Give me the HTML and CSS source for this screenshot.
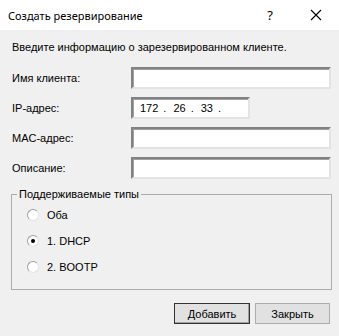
FILE: index.html
```html
<!DOCTYPE html>
<html lang="ru">
<head>
  <meta charset="UTF-8" />
  <title>Создать резервирование</title>
  <link rel="stylesheet" href="styles.css">
</head>
<body>
  <div class="window">
    <div class="titlebar">
      <span class="title">Создать резервирование</span>
      <span class="help">?</span>
      <span class="close">
        <svg width="12" height="12" viewBox="0 0 12 12"><path d="M1 1 L11 11 M11 1 L1 11" stroke="#000" stroke-width="1.1" fill="none"/></svg>
      </span>
    </div>

    <div class="content">
      <p class="intro">Введите информацию о зарезервированном клиенте.</p>

      <div class="row">
        <label>Имя клиента:</label>
        <div class="field wide"></div>
      </div>
      <div class="row">
        <label>IP-адрес:</label>
        <div class="field ip">
          <span class="oct">172</span><span class="sep">.</span>
          <span class="oct">26</span><span class="sep">.</span>
          <span class="oct">33</span><span class="sep">.</span>
        </div>
      </div>
      <div class="row">
        <label>MAC-адрес:</label>
        <div class="field wide"></div>
      </div>
      <div class="row">
        <label>Описание:</label>
        <div class="field wide"></div>
      </div>

      <fieldset class="group">
        <legend>Поддерживаемые типы</legend>
        <div class="radio"><span class="dot"></span>Оба</div>
        <div class="radio"><span class="dot checked"></span>1. DHCP</div>
        <div class="radio"><span class="dot"></span>2. BOOTP</div>
      </fieldset>

      <div class="buttons">
        <button class="btn default">Добавить</button>
        <button class="btn">Закрыть</button>
      </div>
    </div>
  </div>
</body>
</html>
```

FILE: styles.css
```css
body {
  margin: 0;
  background: #f0f0f0;
  font-family: "Liberation Sans", Arial, sans-serif;
  font-size: 11px;
  color: #000;
}
.window {
  width: 339px;
  height: 336px;
  background: #f0f0f0;
}
.titlebar {
  height: 30px;
  background: #fff;
  display: flex;
  align-items: center;
  font-family: "Noto Sans", "Open Sans", sans-serif;
  font-size: 11px;
}
.title {
  margin-left: 8px;
  flex: 1;
}
.help {
  width: 46px;
  text-align: center;
  font-size: 13px;
}
.close {
  width: 46px;
  display: flex;
  justify-content: center;
}
.content {
  padding: 10px 8px 0 12px;
}
.intro {
  margin: 0 0 13px 0;
  line-height: 14px;
}
.row {
  display: flex;
  align-items: center;
  height: 22px;
  margin-bottom: 8px;
}
.row label {
  width: 119px;
}
.field {
  height: 18px;
  background: #fff;
  border: 2px solid;
  border-color: #828282 #e3e3e3 #e3e3e3 #828282;
  box-shadow: inset 1px 1px #a0a0a0;
}
.field.wide {
  width: 196px;
}
.field.ip {
  width: 115px;
  display: flex;
  align-items: center;
}
.oct {
  margin-left: 7px;
}
.sep {
  margin-left: 5px;
}
.group {
  margin: 9px 0 0 -1px;
  width: 321px;
  height: 102px;
  padding: 0;
  border: 1px solid #adadad;
  box-sizing: border-box;
}
.group legend {
  padding: 0 2px;
  margin-left: 5px;
}
.radio {
  display: flex;
  align-items: center;
  height: 14px;
  margin: 8px 0 12px 15px;
}
.radio + .radio {
  margin-top: 0;
}
.dot {
  width: 10px;
  height: 10px;
  border-radius: 50%;
  background: #fff;
  border: 1px solid;
  border-color: #a0a0a0 #e3e3e3 #e3e3e3 #a0a0a0;
  margin-right: 8px;
  display: flex;
  align-items: center;
  justify-content: center;
}
.dot.checked::after {
  content: "";
  width: 4px;
  height: 4px;
  border-radius: 50%;
  background: #000;
}
.buttons {
  display: flex;
  justify-content: flex-end;
  gap: 5px;
  margin-top: 13px;
  padding-right: 1px;
}
.btn {
  width: 76px;
  height: 21px;
  font-family: "Liberation Sans", Arial, sans-serif;
  font-size: 11px;
  background: #e1e1e1;
  border: 1px solid #adadad;
  padding: 0;
}
.btn + .btn {
  width: 75px;
}
.btn.default {
  border: 1px solid #333;
  box-shadow: inset -1px -1px #a0a0a0;
}
```
